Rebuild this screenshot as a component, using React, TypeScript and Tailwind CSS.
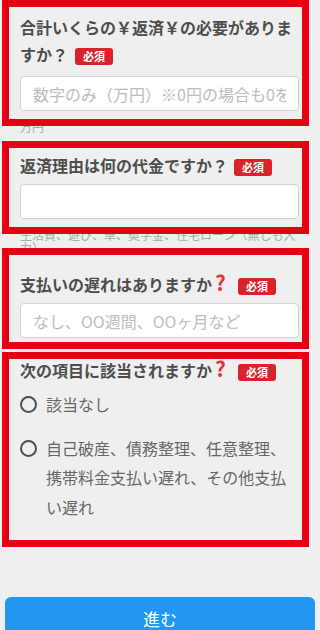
import React from 'react';

const jp = { fontFamily: '"Noto Sans CJK JP", "Noto Sans", sans-serif' };

function Required({ className = '' }: { className?: string }) {
  return (
    <span
      className={`inline-flex h-[17px] w-[38px] items-center justify-center rounded-[3px] bg-[#d9232b] align-middle text-[11px] font-bold leading-none text-white ${className}`}
    >
      必須
    </span>
  );
}

function Frame({ height }: { height: number }) {
  // red highlight box drawn over the question
  return (
    <div
      className="pointer-events-none absolute left-0 right-0 top-0 z-10 border-[7px] border-[#e50013]"
      style={{ height }}
    />
  );
}

function Help() {
  return <span className="ml-[3px] inline-block w-[15px] text-[21px] font-bold leading-none text-[#e0353b]">?</span>;
}

function TextInput({ placeholder }: { placeholder?: string }) {
  return (
    <input
      type="text"
      placeholder={placeholder}
      className="block h-[35px] w-[279px] rounded-[4px] border border-[#d3d3d3] bg-white px-3 text-[16px] text-[#333] outline-none placeholder:text-[#bdbdbd]"
      style={jp}
    />
  );
}

function Radio({ children, className = '' }: { children: React.ReactNode; className?: string }) {
  return (
    <label className={`flex items-start gap-[9px] ${className}`}>
      <span className="mt-[6px] h-[17px] w-[17px] shrink-0 rounded-full border-[2.5px] border-[#4f4f4f]" />
      <span className="w-[253px] text-[16px] leading-[29.5px] text-[#666]">{children}</span>
    </label>
  );
}

export default function App() {
  return (
    <div className="min-h-[630px] w-[320px] overflow-hidden bg-[#efefef]" style={jp}>
      {/* Q1 */}
      <section className="relative ml-[2px] w-[307px] pl-[18px]">
        <Frame height={126} />
        <h2 className="w-[282px] pt-[14px] text-[16px] font-bold leading-[27px] text-[#4d4d4d]">
          合計いくらの￥返済￥の必要がありますか？
          <Required className="ml-[7px]" />
        </h2>
        <div className="mt-[8px]">
          <TextInput placeholder="数字のみ（万円）※0円の場合も0を入力" />
        </div>
        <p className="mt-[9px] text-[12px] leading-[13px] text-[#aaa]">万円</p>
      </section>

      {/* Q2 */}
      <section className="relative ml-[2px] mt-[8px] w-[307px] pl-[18px]">
        <Frame height={93} />
        <h2 className="pt-[11px] text-[16px] font-bold leading-[27px] text-[#4d4d4d]">
          返済理由は何の代金ですか？
          <Required className="ml-[6px]" />
        </h2>
        <div className="mt-[5px]">
          <TextInput />
        </div>
        <p className="mt-[9px] w-[279px] text-[12px] leading-[13px] text-[#aaa]">
          生活費、遊び、車、奨学金、住宅ローン（無しも入力）
        </p>
      </section>

      {/* Q3 */}
      <section className="relative ml-[2px] mt-[-6px] h-[101px] w-[307px] pl-[18px]">
        <Frame height={101} />
        <h2 className="pt-[23px] text-[16px] font-bold leading-[27px] text-[#4d4d4d]">
          支払いの遅れはありますか
          <Help />
          <Required className="ml-[8px]" />
        </h2>
        <div className="mt-[5px]">
          <TextInput placeholder="なし、OO週間、OOヶ月など" />
        </div>
      </section>

      {/* Q4 */}
      <section className="relative ml-[2px] mt-[3px] h-[195px] w-[307px] pl-[18px]">
        <Frame height={195} />
        <h2 className="pt-[5px] text-[16px] font-bold leading-[27px] text-[#4d4d4d]">
          次の項目に該当されますか
          <Help />
          <Required className="ml-[8px]" />
        </h2>
        <Radio className="mt-[6px]">該当なし</Radio>
        <Radio className="mt-[14px]">自己破産、債務整理、任意整理、携帯料金支払い遅れ、その他支払い遅れ</Radio>
      </section>

      <div className="mt-[50px] px-[5px]">
        <button
          type="button"
          className="flex h-[48px] w-full items-center justify-center rounded-[6px] bg-[#2196f3] pb-[4px] text-[17px] text-white"
        >
          進む
        </button>
      </div>
    </div>
  );
}
